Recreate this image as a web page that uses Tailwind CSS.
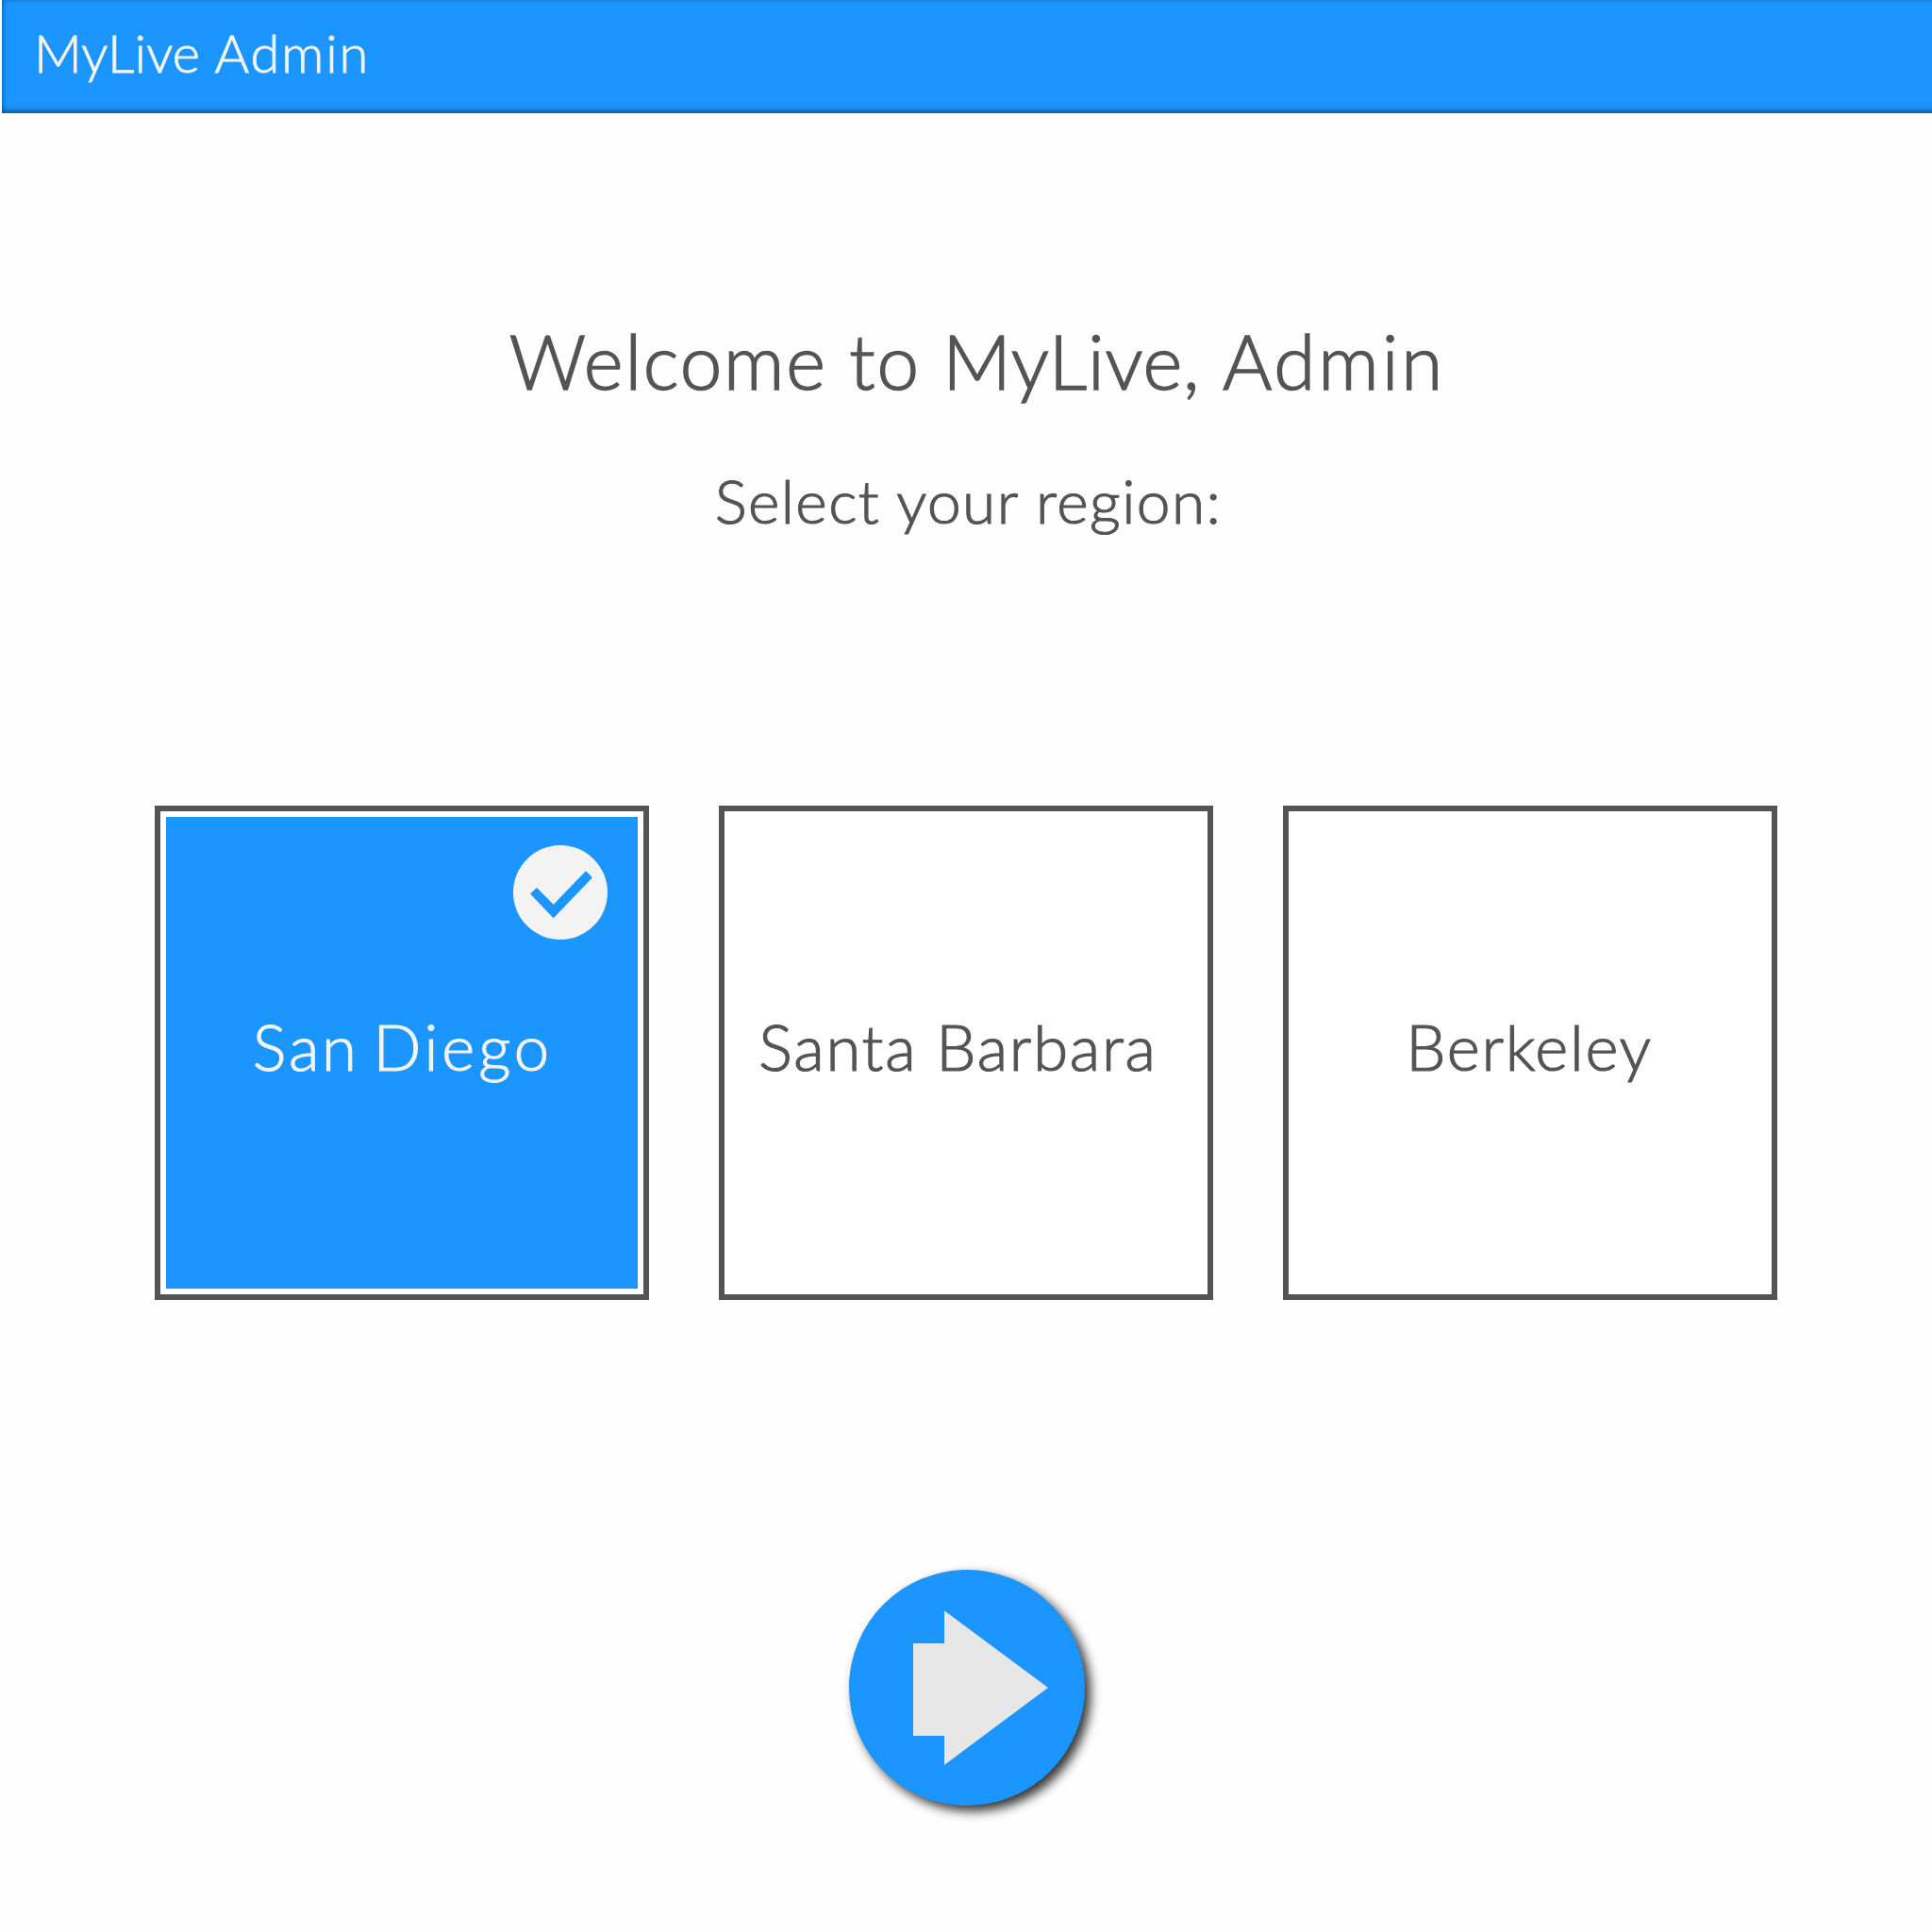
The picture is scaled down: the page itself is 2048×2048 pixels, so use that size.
<!DOCTYPE html>
<html lang="en">
<head>
<meta charset="utf-8">
<title>MyLive Admin</title>
<script src="https://cdn.jsdelivr.net/npm/@tailwindcss/browser@4"></script>
</head>
<body class="w-[2048px] h-[2048px] overflow-hidden bg-[#fefefe] font-['Avenir','Lato',sans-serif] font-light text-[#545454] flex flex-col">
  <header class="ml-[2px] -mr-[12px] h-[120px] shrink-0 bg-[#1b95ff] shadow-[inset_0_-2px_6px_rgba(0,0,0,0.5)] flex items-center pl-[34px] pb-[8px]">
    <h1 class="text-[56px] leading-[64px] font-light tracking-[0.2px] [-webkit-text-stroke:0.9px_#f3f3f3] text-[#f3f3f3] whitespace-nowrap">MyLive <span class="tracking-[1.9px]">Admin</span></h1>
  </header>
  <main class="flex flex-col items-center">
    <h2 class="mt-[214px] pl-[24px] text-[80px] leading-[96px] font-light tracking-[1.8px] [-webkit-text-stroke:1.5px_#545454] whitespace-nowrap">Welcome to <span class="tracking-[0.8px]">MyLive,</span> <span class="tracking-[2.9px]">Admin</span></h2>
    <p class="mt-[63px] pl-[5px] text-[64px] leading-[76px] tracking-[1.4px] [-webkit-text-stroke:1.2px_#545454] whitespace-nowrap">Select your region:</p>
    <div class="mt-[285px] flex gap-[74px]">
      <button class="relative w-[524px] h-[524px] border-[6px] border-[#545454] bg-white p-[6px]">
        <span class="block w-full h-full bg-[#1b95ff] pt-[203px] pl-[2px] text-center text-[67px] leading-[80px] font-light tracking-[2.7px] [-webkit-text-stroke:1.1px_#f3f3f3] [word-spacing:-6px] text-[#f3f3f3] whitespace-nowrap">San <span class="tracking-[3.9px]">Diego</span></span>
        <svg class="absolute left-[374px] top-[36px] w-[100px] h-[100px]" viewBox="0 0 100 100">
          <circle cx="50" cy="50" r="50" fill="#f3f3f3"/>
          <path d="M18 51.500L25 45L42.700 62.700L77 27.200L84 34.200L42.700 77.200Z" fill="#1b95ff"/>
        </svg>
      </button>
      <button class="w-[524px] h-[524px] border-[6px] border-[#545454] bg-white flex items-center justify-center pb-[14px] pr-[17px] text-[67px] leading-[80px] font-light tracking-[1.7px] [-webkit-text-stroke:1.2px_#545454] whitespace-nowrap">Santa Barbara</button>
      <button class="w-[524px] h-[524px] border-[6px] border-[#545454] bg-white flex items-center justify-center pb-[14px] pr-[2px] text-[67px] leading-[80px] font-light tracking-[1.7px] [-webkit-text-stroke:1.2px_#545454] whitespace-nowrap">Berkeley</button>
    </div>
    <button class="mt-[286px] ml-[2px] w-[250px] h-[250px] rounded-full bg-[#1b95ff] shadow-[6px_6px_12px_rgba(0,0,0,0.8)]" aria-label="Next">
      <svg class="w-[250px] h-[250px]" viewBox="0 0 250 250"><path d="M68 78H101V43.300L211 125L101 207V176H68Z" fill="#e7e7e7"/></svg>
    </button>
  </main>
</body>
</html>
